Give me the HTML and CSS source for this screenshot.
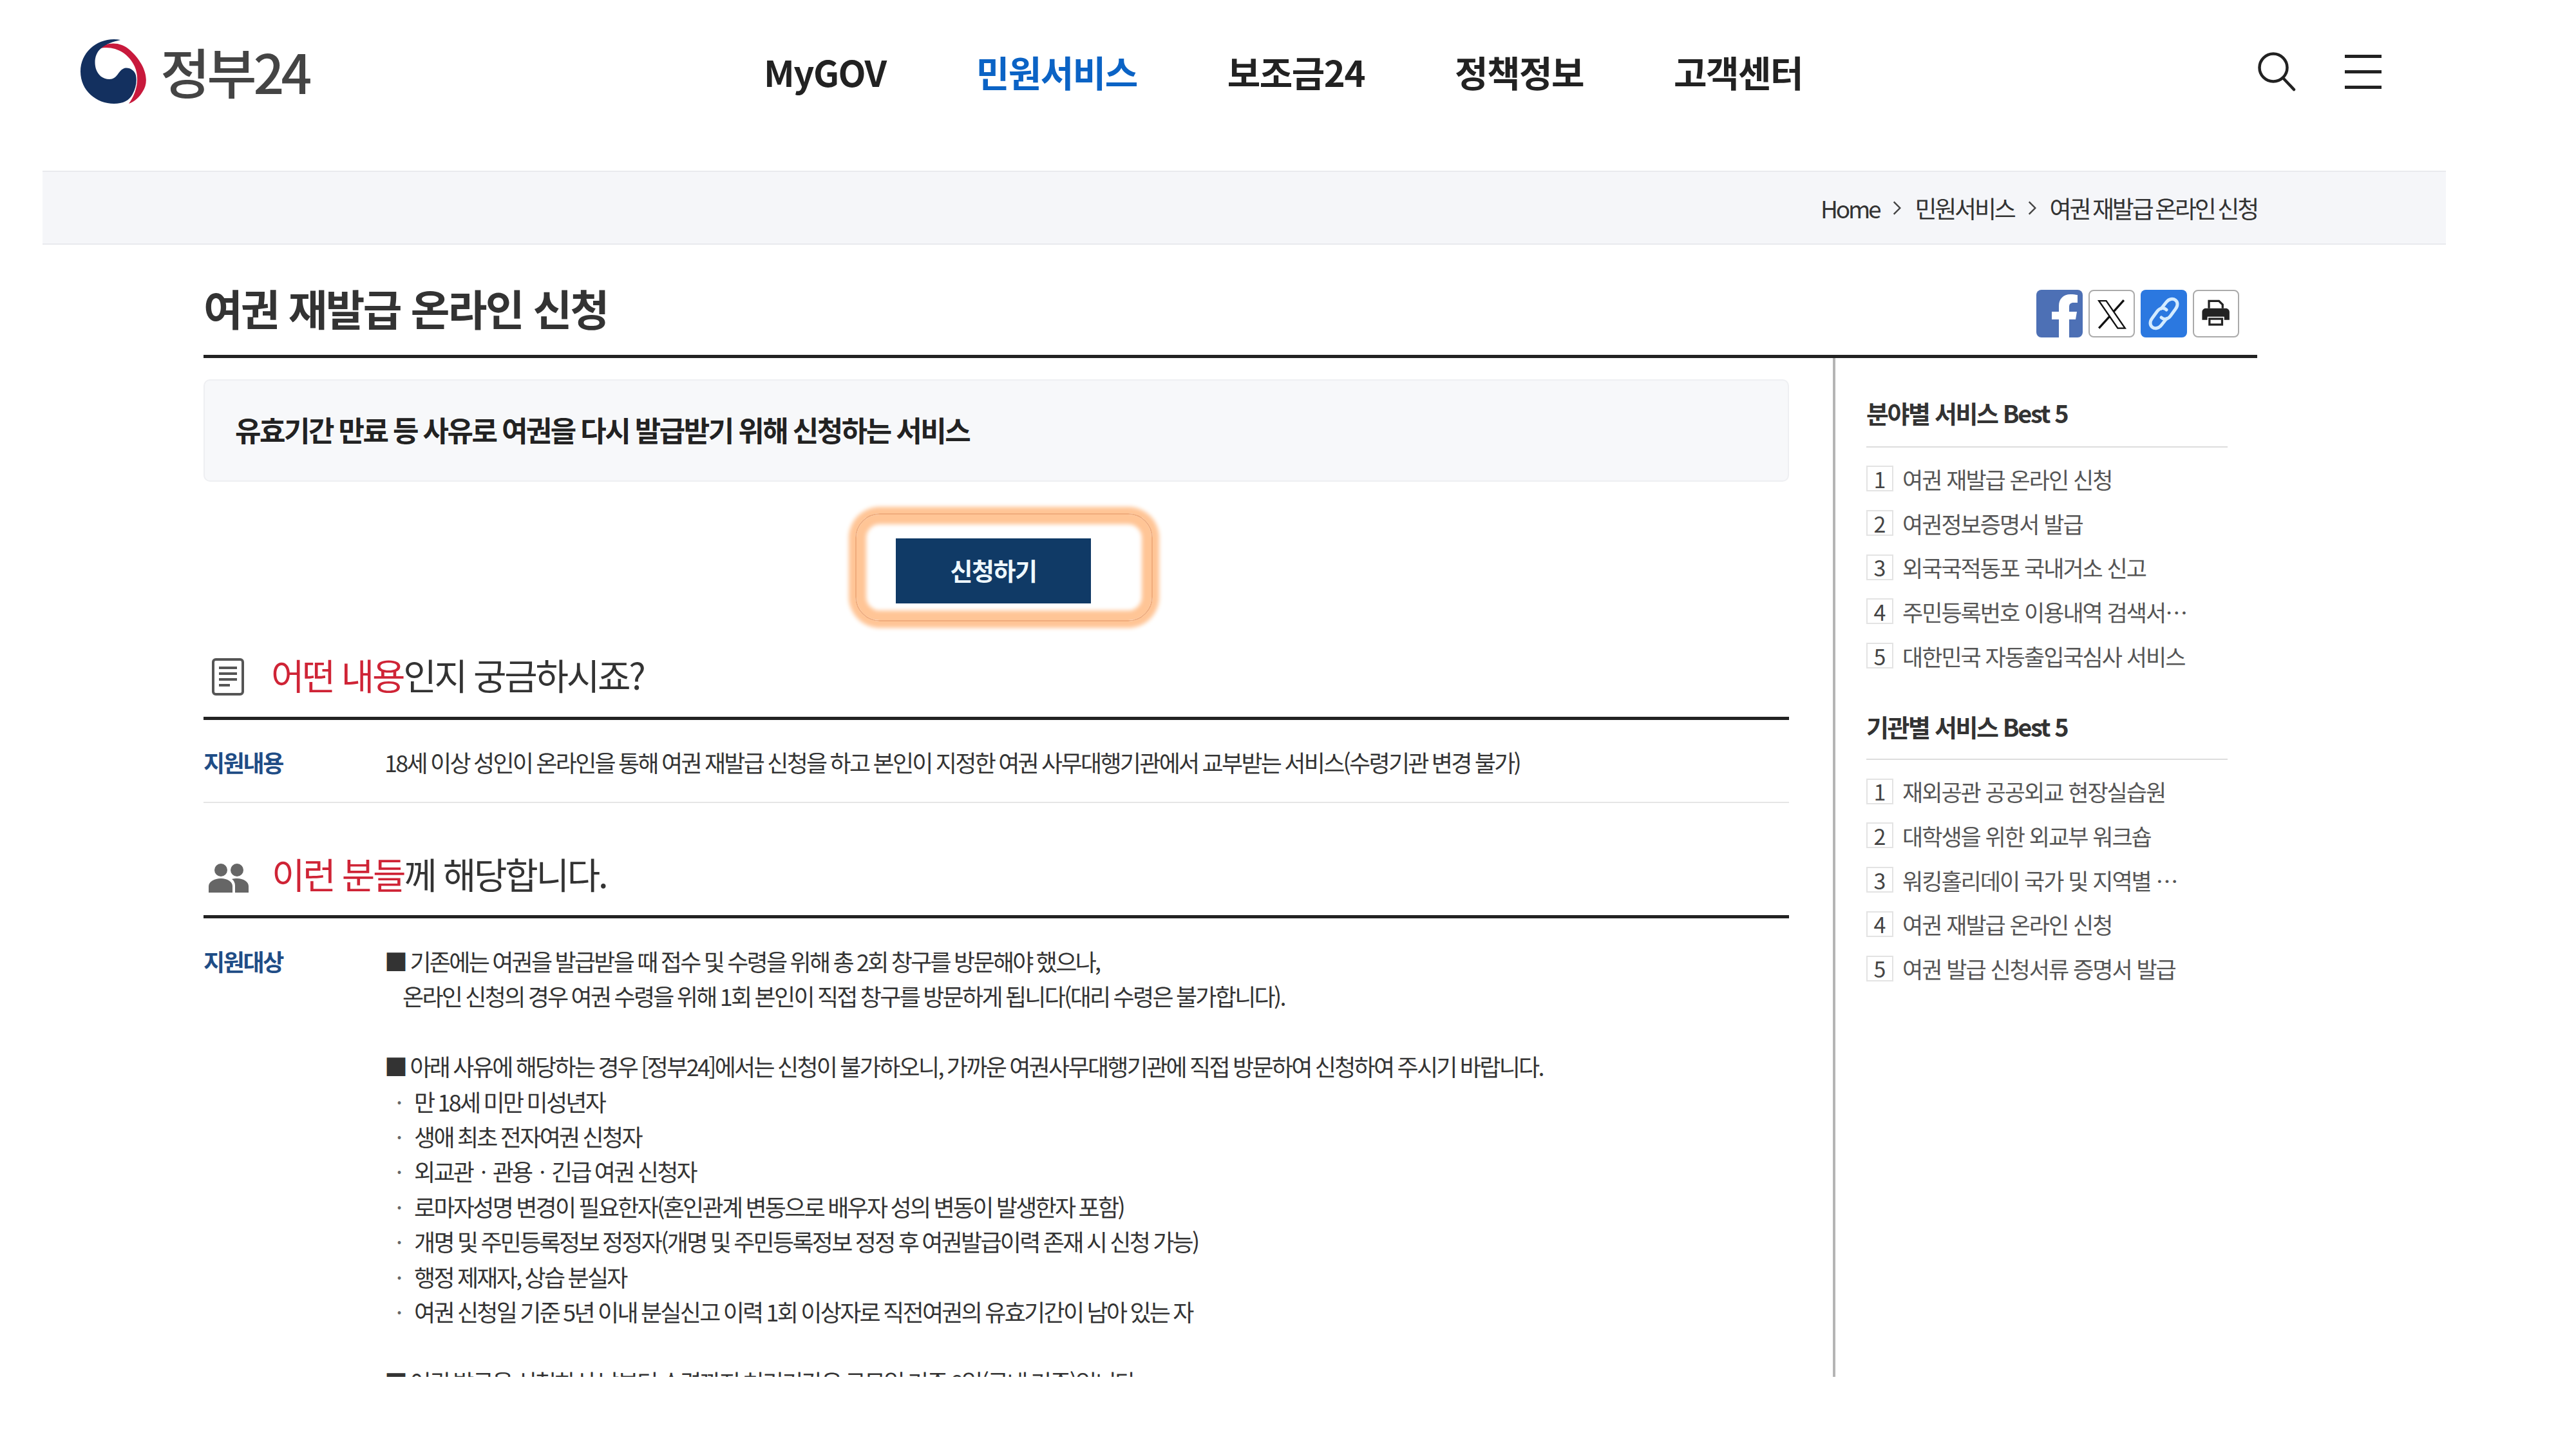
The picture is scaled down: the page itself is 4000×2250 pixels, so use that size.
FILE: index.html
```html
<!DOCTYPE html>
<html lang="ko">
<head>
<meta charset="utf-8">
<title>여권 재발급 온라인 신청</title>
<link rel="stylesheet" href="styles.css">
</head>
<body>
<header class="site-header">
  <a class="logo">
    <svg class="logo-mark" viewBox="0 0 105 100" aria-hidden="true">
      <path fill="#c8193c" d="M27 15C40 4 62 3 77 17C97 35 110 62 96 82C91 90 85 96 75 100C88 82 92 60 84 42C74 20 50 8 27 15Z"/>
      <path fill="#13305f" d="M62 1C30-5 0 18 0 50C0 80 25 100 52 100C66 100 76 95 81 85C86 76 88 65 86 56C84 47 73 42 66 46C58 50 57 62 45 62C34 62 27 55 24 46C21 36 22 22 32 14C40 7 50 4 62 1Z"/>
    </svg>
    <span class="logo-text">정부24</span>
  </a>
  <nav class="main-nav">
    <a class="nav-link nav-en">MyGOV</a>
    <a class="nav-link nav-active">민원서비스</a>
    <a class="nav-link">보조금24</a>
    <a class="nav-link">정책정보</a>
    <a class="nav-link">고객센터</a>
  </nav>
  <div class="header-tools">
    <svg class="search-icon" viewBox="0 0 60 62" aria-hidden="true">
      <circle cx="25" cy="25" r="21.5" fill="none" stroke="#222" stroke-width="4.5"/>
      <path d="M40 41L57 59" fill="none" stroke="#222" stroke-width="4.5" stroke-linecap="round"/>
    </svg>
    <div class="menu-icon"><i></i><i></i><i></i></div>
  </div>
</header>

<div class="breadcrumb-band">
  <div class="breadcrumb">
    <span>Home</span>
    <svg class="crumb-sep" viewBox="0 0 12 20" aria-hidden="true"><path d="M2 2L10 10L2 18" fill="none" stroke="#444" stroke-width="2"/></svg>
    <span>민원서비스</span>
    <svg class="crumb-sep" viewBox="0 0 12 20" aria-hidden="true"><path d="M2 2L10 10L2 18" fill="none" stroke="#444" stroke-width="2"/></svg>
    <span>여권 재발급 온라인 신청</span>
  </div>
</div>

<div class="page">
  <div class="title-row">
    <h1 class="page-title">여권 재발급 온라인 신청</h1>
    <div class="share">
      <a class="share-btn share-fb">
        <svg viewBox="0 0 72 72" aria-hidden="true"><path transform="translate(3 2)" fill="#fff" d="M48 72V43H58L60 31H48V24C48 19 50 17 55 17H61V5C58 4.500 54 4 50 4C39 4 32 11 32 22V31H21V43H32V72Z"/></svg>
      </a>
      <a class="share-btn share-line">
        <svg viewBox="0 0 72 72" aria-hidden="true"><path fill="none" stroke="#111" stroke-width="2.500" d="M15 15H27L58 60H46Z"/><path fill="none" stroke="#111" stroke-width="3.500" d="M56 14L39 33M33 40L15 60"/></svg>
      </a>
      <a class="share-btn share-link">
        <svg viewBox="0 0 72 72" aria-hidden="true"><g fill="none" stroke="#d4ebff" stroke-width="5" stroke-linecap="round"><path d="M32 28L40 18C44 13 50 12 54 15C58 18 58 24 54 29L46 40C42 45 36 46 32 42"/><path d="M40 44L32 54C28 59 22 60 18 57C14 54 14 48 18 43L26 32C30 27 36 26 40 30"/></g></svg>
      </a>
      <a class="share-btn share-line">
        <svg viewBox="0 0 72 72" aria-hidden="true"><g transform="translate(4.500 3) scale(.865)"><path fill="none" stroke="#222" stroke-width="4" d="M23 28V14H42L49 21V28"/><path fill="#222" d="M17 28H55C59 28 62 31 62 35V50H52V44H20V50H10V35C10 31 13 28 17 28Z"/><rect x="24" y="48" width="24" height="11" fill="none" stroke="#222" stroke-width="4"/></g></svg>
      </a>
    </div>
  </div>

  <div class="content-grid">
    <main class="main-col">
      <div class="summary">유효기간 만료 등 사유로 여권을 다시 발급받기 위해 신청하는 서비스</div>

      <div class="apply-wrap">
        <div class="apply-ring"><a class="apply-btn">신청하기</a></div>
      </div>

      <h2 class="section-head head-first">
        <svg class="head-icon" viewBox="0 0 54 60" aria-hidden="true">
          <rect x="4" y="3" width="46" height="54" rx="4" fill="none" stroke="#555" stroke-width="4"/>
          <path d="M13 16H41M13 25H41M13 34H41M13 43H30" stroke="#555" stroke-width="4"/>
        </svg>
        <span><em class="accent">어떤 내용</em>인지 궁금하시죠?</span>
      </h2>
      <div class="info-row row-single">
        <div class="info-label">지원내용</div>
        <div class="info-body">18세 이상 성인이 온라인을 통해 여권 재발급 신청을 하고 본인이 지정한 여권 사무대행기관에서 교부받는 서비스(수령기관 변경 불가)</div>
      </div>

      <h2 class="section-head head-second">
        <svg class="head-icon people" viewBox="0 0 62 46" aria-hidden="true">
          <circle cx="19" cy="11" r="10" fill="#666"/><circle cx="44" cy="11" r="10" fill="#666"/>
          <path fill="#666" d="M0 46V36C0 29 9 24 19 24C29 24 37 29 37 36V46Z"/>
          <path fill="#666" d="M41 46V35C41 31 39 27 36 25C39 24 41 24 44 24C54 24 62 29 62 36V46Z"/>
        </svg>
        <span><em class="accent">이런 분들</em>께 해당합니다.</span>
      </h2>
      <div class="info-row">
        <div class="info-label">지원대상</div>
        <div class="info-body">
          <p>■ 기존에는 여권을 발급받을 때 접수 및 수령을 위해 총 2회 창구를 방문해야 했으나,</p>
          <p class="indent">온라인 신청의 경우 여권 수령을 위해 1회 본인이 직접 창구를 방문하게 됩니다(대리 수령은 불가합니다).</p>
          <p class="blank">&nbsp;</p>
          <p>■ 아래 사유에 해당하는 경우 [정부24]에서는 신청이 불가하오니, 가까운 여권사무대행기관에 직접 방문하여 신청하여 주시기 바랍니다.</p>
          <p class="bullet"><span class="dot">·</span>만 18세 미만 미성년자</p>
          <p class="bullet"><span class="dot">·</span>생애 최초 전자여권 신청자</p>
          <p class="bullet"><span class="dot">·</span>외교관ㆍ관용ㆍ긴급 여권 신청자</p>
          <p class="bullet"><span class="dot">·</span>로마자성명 변경이 필요한자(혼인관계 변동으로 배우자 성의 변동이 발생한자 포함)</p>
          <p class="bullet"><span class="dot">·</span>개명 및 주민등록정보 정정자(개명 및 주민등록정보 정정 후 여권발급이력 존재 시 신청 가능)</p>
          <p class="bullet"><span class="dot">·</span>행정 제재자, 상습 분실자</p>
          <p class="bullet"><span class="dot">·</span>여권 신청일 기준 5년 이내 분실신고 이력 1회 이상자로 직전여권의 유효기간이 남아 있는 자</p>
          <p class="blank">&nbsp;</p>
          <p>■ 여권 발급을 신청하신 날부터 수령까지 처리기간은 근무일 기준 8일(국내 기준)입니다.</p>
        </div>
      </div>
    </main>

    <aside class="side-col">
      <h3 class="side-head">분야별 서비스 Best 5</h3>
      <ol class="side-list">
        <li><b>1</b><span>여권 재발급 온라인 신청</span></li>
        <li><b>2</b><span>여권정보증명서 발급</span></li>
        <li><b>3</b><span>외국국적동포 국내거소 신고</span></li>
        <li><b>4</b><span>주민등록번호 이용내역 검색서…</span></li>
        <li><b>5</b><span>대한민국 자동출입국심사 서비스</span></li>
      </ol>
      <h3 class="side-head side-head-second">기관별 서비스 Best 5</h3>
      <ol class="side-list">
        <li><b>1</b><span>재외공관 공공외교 현장실습원</span></li>
        <li><b>2</b><span>대학생을 위한 외교부 워크숍</span></li>
        <li><b>3</b><span>워킹홀리데이 국가 및 지역별 …</span></li>
        <li><b>4</b><span>여권 재발급 온라인 신청</span></li>
        <li><b>5</b><span>여권 발급 신청서류 증명서 발급</span></li>
      </ol>
    </aside>
  </div>
</div>
</body>
</html>
```
FILE: styles.css
```css
* { box-sizing: border-box; }
html, body { margin: 0; padding: 0; background: #fff; }
body { width: 4000px; height: 2250px; overflow: hidden; font-family: "Noto Sans CJK KR", "Noto Sans", sans-serif; color: #222; }
h1, h2, h3, p, ol { margin: 0; padding: 0; font-weight: inherit; }
em { font-style: normal; }
ol { list-style: none; }

.site-header { display: flex; align-items: center; height: 265px; padding: 0 0 43px 125px; }
.logo { display: flex; align-items: center; gap: 19px; width: 1061px; flex: none; }
.logo-mark { width: 105px; height: 100px; flex: none; }
.logo-text { font-size: 84px; line-height: 100px; letter-spacing: -5px; color: #444; font-weight: 500; margin-top: -3px; }
.main-nav { display: flex; align-items: center; gap: 140px; width: 2319px; flex: none; }
.nav-link { font-size: 56px; line-height: 80px; font-weight: 700; letter-spacing: -1.500px; color: #222; white-space: nowrap; }
.nav-active { color: #0b63c5; }
.header-tools { display: flex; align-items: center; gap: 76px; }
.search-icon { width: 60px; height: 62px; }
.menu-icon { display: flex; flex-direction: column; justify-content: space-between; width: 57px; height: 53px; }
.menu-icon i { display: block; height: 5px; background: #222; }

.breadcrumb-band { margin-left: 66px; width: 3732px; height: 115px; background: #f5f6f9; border-top: 2px solid #e9eaee; border-bottom: 2px solid #e9eaee; padding-right: 293px; display: flex; align-items: center; justify-content: flex-end; }
.breadcrumb { display: flex; align-items: center; gap: 20px; font-size: 37px; letter-spacing: -3.200px; word-spacing: -2.500px; color: #333; }
.crumb-sep { width: 15px; height: 24px; }

.page { margin-left: 316px; width: 3189px; }
.title-row { display: flex; align-items: center; justify-content: space-between; height: 176px; padding-right: 28px; border-bottom: 5px solid #222; }
.page-title { font-size: 66px; font-weight: 700; letter-spacing: -2.700px; line-height: 90px; color: #333; margin-top: 22px; }
.share { display: flex; gap: 9px; margin-top: 42px; }
.share-btn { display: block; width: 72px; height: 74px; border-radius: 8px; overflow: hidden; }
.share-btn svg { display: block; width: 100%; height: 100%; }
.share-fb { background: #4d70b5; }
.share-link { background: #2b78e0; }
.share-line { background: #fff; border: 2px solid #aaa; }

.content-grid { display: grid; grid-template-columns: 2534px 1fr; height: 1582px; }
.main-col { width: 2534px; padding-right: 68px; border-right: 4px solid #b5b5b5; overflow: hidden; padding-top: 33px; }
.summary { height: 159px; background: #f7f8fa; border: 2px solid #eeeff2; border-radius: 10px; padding: 0 47px 4px; display: flex; align-items: center; font-size: 44px; font-weight: 700; letter-spacing: -2.500px; word-spacing: -1.300px; color: #222; }

.apply-wrap { display: flex; margin-top: 49px; padding-left: 1012px; }
.apply-ring { padding: 37px 94px 26px 61px; border: 2px solid #f0ac7c; border-radius: 38px; box-shadow: 0 0 6px 10px #ffc596, inset 0 0 6px 15px #ffc596; }
.apply-btn { display: flex; align-items: center; justify-content: center; width: 303px; height: 101px; padding-bottom: 4px; background: #103a66; color: #eef8ff; font-size: 38px; font-weight: 700; letter-spacing: -1.500px; }

.section-head { display: flex; align-items: center; height: 125px; border-bottom: 5px solid #222; font-size: 56px; letter-spacing: -3.300px; color: #333; font-weight: 400; }
.head-first { height: 135px; margin-top: 18px; padding-bottom: 4px; }
.head-second { margin-top: 54px; padding-bottom: 12px; }
.head-icon { width: 54px; height: 60px; margin: 10px 40px 0 11px; flex: none; }
.head-icon.people { width: 62px; height: 46px; margin: 15px 36px 0 8px; }
.accent { color: #cf2436; }

.info-row { display: grid; grid-template-columns: 281px 1fr; padding-top: 39px; font-size: 36px; line-height: 54.400px; letter-spacing: -2.700px; }
.row-single { height: 129px; padding-top: 38px; border-bottom: 2px solid #e6e6e6; }
.info-label { font-weight: 700; color: #1f4d86; letter-spacing: -2.400px; }
.info-body { color: #333; white-space: nowrap; word-spacing: -1.300px; }
.indent { padding-left: 28px; }
.bullet { padding-left: 18px; }
.dot { display: inline-block; width: 28px; color: #666; }
.blank { height: 54.400px; }

.side-col { padding: 34px 46px 0 48px; }
.side-head { height: 105px; border-bottom: 2px solid #ddd; font-size: 38px; font-weight: 700; letter-spacing: -2.400px; line-height: 102px; color: #333; }
.side-head-second { height: 103px; margin-top: 25px; }
.side-list { padding-top: 14px; }
.side-list li { display: flex; align-items: center; height: 68.700px; font-size: 35px; letter-spacing: -2px; color: #555; white-space: nowrap; }
.side-list b { width: 42px; height: 40px; margin-right: 14px; border: 2px solid #e3e3e3; display: flex; align-items: center; justify-content: center; font-weight: 400; font-size: 34px; letter-spacing: 0; color: #444; flex: none; }
```
